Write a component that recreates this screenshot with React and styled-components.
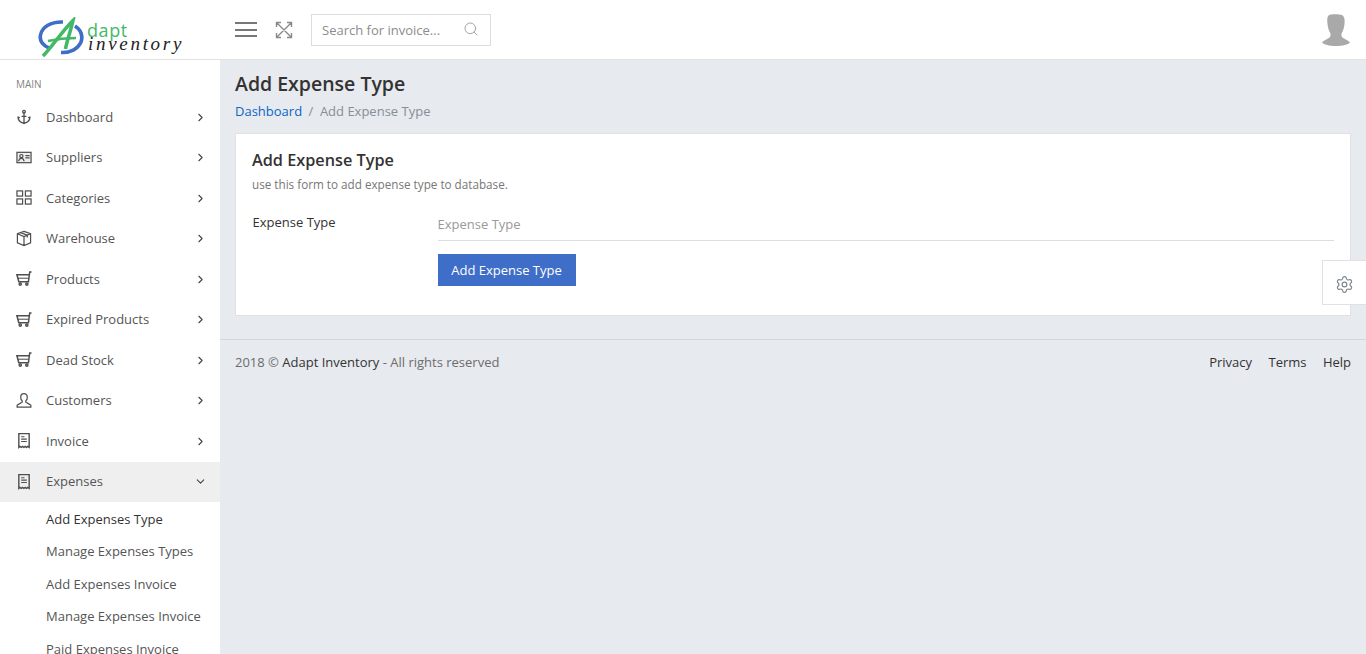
import React from 'react';
import styled, { createGlobalStyle } from 'styled-components';
import { Anchor, ChevronRight, ChevronDown, Search, Settings } from 'lucide-react';

const Global = createGlobalStyle`
  html, body {
    margin: 0;
    height: 100%;
    overflow: hidden;
  }
  body {
    font-family: "Open Sans", "Noto Sans", sans-serif;
    font-size: 13px;
    color: #555;
    background: #e7eaef;
  }
  * { box-sizing: border-box; }
`;

const Page = styled.div`
  position: relative;
  height: 654px;
  overflow: hidden;
  display: flex;
  flex-direction: column;
`;

const Header = styled.header`
  height: 60px;
  flex: none;
  display: flex;
  align-items: center;
  background: #fff;
  border-bottom: 1px solid #e2e2e2;
`;

const LogoBox = styled.div`
  width: 220px;
  flex: none;
  height: 59px;
  display: flex;
  padding: 17px 0 0 37px;
`;

const LogoWords = styled.div`
  display: flex;
  flex-direction: column;
`;

const LogoTop = styled.span`
  font-size: 18px;
  line-height: 10px;
  margin-top: 8px;
  margin-left: 2px;
  letter-spacing: 0.6px;
  color: #43b866;
`;

const LogoBottom = styled.span`
  font-family: "Liberation Serif", serif;
  font-style: italic;
  font-size: 19px;
  line-height: 16px;
  margin-top: 1px;
  margin-left: 3px;
  letter-spacing: 2.7px;
  color: #222;
`;

const Burger = styled.button`
  width: 22px;
  height: 15px;
  margin-left: 15px;
  padding: 0;
  border: 0;
  background: none;
  display: flex;
  flex-direction: column;
  justify-content: space-between;
  span {
    display: block;
    height: 2px;
    background: #777;
  }
`;

const Expand = styled.svg`
  width: 18px;
  height: 18px;
  margin-left: 18px;
  color: #8a8a8a;
`;

const SearchBox = styled.div`
  width: 180px;
  height: 32px;
  margin-left: 18px;
  padding: 0 10px;
  display: flex;
  align-items: center;
  justify-content: space-between;
  border: 1px solid #dcdcdc;
  color: #8c8c8c;
  font-size: 13px;
  svg { color: #a3a3a3; margin: -2px 1px 0 0; }
`;

const Avatar = styled.svg`
  width: 28px;
  height: 32px;
  margin-left: auto;
  margin-right: 16px;
  margin-top: 1px;
`;

const Body = styled.div`
  flex: 1;
  min-height: 0;
  display: flex;
`;

const Sidebar = styled.aside`
  width: 220px;
  flex: none;
  background: #fff;
  overflow: hidden;
  padding-top: 17px;
`;

const SideTitle = styled.div`
  font-size: 10px;
  line-height: 14px;
  color: #848484;
  padding-left: 16px;
  margin-bottom: 5.5px;
  text-transform: uppercase;
`;

const NavRow = styled.div`
  height: 40.5px;
  display: flex;
  align-items: center;
  padding: 0 13.5px 0 16px;
  color: #555;
  background: ${p => (p.$open ? '#efefef' : 'transparent')};
  margin-top: ${p => (p.$open ? '0.5px' : '0')};
  padding-bottom: ${p => (p.$open ? '1px' : '0')};
`;

const NavIcon = styled.span`
  width: 16px;
  height: 16px;
  display: flex;
  align-items: center;
  justify-content: center;
  color: #4f4f4f;
  margin-right: 14px;
  flex: none;
`;

const NavLabel = styled.span`
  flex: 1;
`;

const Chevron = styled.span`
  display: flex;
  margin-top: 1px;
  color: #444;
`;

const SubRow = styled.div`
  height: 32.4px;
  line-height: 32.4px;
  padding-left: 46px;
  white-space: nowrap;
  color: ${p => (p.$active ? '#333' : '#555')};
`;

const SubList = styled.div`
  padding-top: 1px;
`;

const Main = styled.main`
  flex: 1;
  min-width: 0;
  display: flex;
  flex-direction: column;
`;

const PageHead = styled.div`
  padding: 9px 15px 0;
  height: 73px;
`;

const PageTitle = styled.h1`
  margin: 0;
  font-size: 19.5px;
  line-height: 30px;
  font-weight: 600;
  color: #333;
`;

const Crumbs = styled.div`
  margin-top: 2px;
  line-height: 20px;
  color: #868e96;
  a { color: #0b66c3; text-decoration: none; }
  span { margin: 0 6.5px; }
`;

const Card = styled.section`
  margin: 0 15px;
  height: 183px;
  padding: 15px 16px;
  background: #fff;
  border: 1px solid #dfe1e5;
`;

const CardTitle = styled.h2`
  margin: 0;
  font-size: 16.25px;
  line-height: 22px;
  font-weight: 600;
  color: #333;
`;

const CardHint = styled.p`
  margin: 5px 0 0;
  font-size: 11.7px;
  line-height: 16px;
  color: #777;
`;

const FormRow = styled.div`
  display: grid;
  grid-template-columns: 185.5px 1fr;
  margin-top: 14px;
`;

const FieldLabel = styled.label`
  line-height: 20px;
  padding: 6px 0 0 0.5px;
  color: #333;
`;

const TextInput = styled.input`
  display: block;
  width: 100%;
  height: 35px;
  padding: 2px 0 0;
  border: 0;
  border-bottom: 1px solid #ddd;
  outline: none;
  font: inherit;
  &::placeholder { color: #999; opacity: 1; }
`;

const Submit = styled.button`
  display: block;
  margin-top: 13px;
  width: 138px;
  height: 32px;
  padding: 0;
  border: 0;
  font: inherit;
  color: #fff;
  background: #3f6ec8;
`;

const Footer = styled.footer`
  margin-top: 23px;
  padding: 12px 15px 0;
  border-top: 1px solid #d3d6da;
  display: flex;
  justify-content: space-between;
  line-height: 20px;
  color: #6c6c6c;
  b { font-weight: 400; color: #333; }
`;

const FooterLinks = styled.div`
  display: flex;
  gap: 16.4px;
  color: #333;
`;

const SettingsTab = styled.div`
  position: absolute;
  right: 0;
  top: 260px;
  width: 44px;
  height: 45px;
  padding-top: 3px;
  display: flex;
  align-items: center;
  justify-content: center;
  background: #fff;
  border: 1px solid #dfe1e5;
  border-right: 0;
  color: #7d858d;
`;

const Line = ({ children }) => (
  <svg width={17} height={17} viewBox="0 0 17 17" fill="none" stroke="currentColor" strokeWidth="1.3">
    {children}
  </svg>
);

const IdIcon = () => (
  <Line>
    <rect x="1" y="3" width="15" height="11" fill="#f1eeee" />
    <circle cx="5.7" cy="7" r="1.7" />
    <path d="M2.8 12.5c.3-2 1.4-3 2.9-3s2.6 1 2.9 3M10 6.5h4.5M10 9h4.5" />
  </Line>
);

const GridIcon = () => (
  <Line>
    <rect x="1" y="1.5" width="6" height="5.5" />
    <rect x="10" y="1.5" width="6" height="5.5" />
    <rect x="1" y="10" width="6" height="5.5" />
    <rect x="10" y="10" width="6" height="5.5" />
  </Line>
);

const BoxIcon = () => (
  <Line>
    <path d="M8.5 1L15.5 3.5V13L8.5 16L1.5 13V3.5ZM1.5 3.5L8.5 6.5L15.5 3.5M8.5 6.5V16M5 2.2L12 5V7.5" />
  </Line>
);

const CartIcon = () => (
  <Line>
    <path d="M16.5 1.5H14.6L13.2 12H3L1 4.5H14.2" strokeWidth="1.6" />
    <path d="M2 8.2H13.6" strokeWidth="1.1" />
    <circle cx="4.5" cy="14.4" r="1.2" strokeWidth="1.5" />
    <circle cx="11.5" cy="14.4" r="1.2" strokeWidth="1.5" />
  </Line>
);

const UserIcon = () => (
  <Line>
    <path d="M8.5 1.2c-2.2 0-3.5 1.6-3.5 3.8 0 1.6.6 3 1.5 3.8.3.5.2 1.5-.4 1.9-1.4.9-4 1.6-4.9 3V15.5h14.6V13.7c-.9-1.4-3.5-2.1-4.9-3-.6-.4-.7-1.4-.4-1.9.9-.8 1.5-2.2 1.5-3.8 0-2.2-1.3-3.8-3.5-3.8Z" />
  </Line>
);

const ReceiptIcon = () => (
  <Line>
    <path d="M3 1.2H14V15.8L12.6 14.8L11.2 15.8L9.8 14.8L8.4 15.8L7 14.8L5.6 15.8L4.2 14.8L3 15.8Z" strokeWidth="1.5" />
    <path d="M5.5 4.5H9M5.5 7H11.5M5.5 9.5H11.5" strokeWidth="1.2" />
  </Line>
);

const navItems = [
  { label: 'Dashboard', icon: <Anchor size={16} strokeWidth={2} /> },
  { label: 'Suppliers', icon: <IdIcon /> },
  { label: 'Categories', icon: <GridIcon /> },
  { label: 'Warehouse', icon: <BoxIcon /> },
  { label: 'Products', icon: <CartIcon /> },
  { label: 'Expired Products', icon: <CartIcon /> },
  { label: 'Dead Stock', icon: <CartIcon /> },
  { label: 'Customers', icon: <UserIcon /> },
  { label: 'Invoice', icon: <ReceiptIcon /> },
  { label: 'Expenses', icon: <ReceiptIcon />, open: true },
];

const subItems = [
  'Add Expenses Type',
  'Manage Expenses Types',
  'Add Expenses Invoice',
  'Manage Expenses Invoice',
  'Paid Expenses Invoice',
];

const LogoMark = () => (
  <svg width="48" height="42" viewBox="0 0 48 42" fill="none">
    <path d="M12 31C5 28 2.500 23 3.500 18C5 10 14 4.500 26 5" stroke="#3f6ec8" strokeWidth="3.6" />
    <path d="M38 9C44 13 46 19 44 25C41 32 33 36 24 35.500" stroke="#3f6ec8" strokeWidth="3.6" />
    <path d="M6 39C14 31 27 12 36 3.500C34 13 30 23 28.500 32" stroke="#43b866" strokeWidth="3.6" />
    <path d="M11 24C20 22 30 21 39 21" stroke="#43b866" strokeWidth="2.6" />
  </svg>
);

export default function App() {
  return (
    <Page>
      <Global />
      <Header>
        <LogoBox>
          <LogoMark />
          <LogoWords>
            <LogoTop>dapt</LogoTop>
            <LogoBottom>inventory</LogoBottom>
          </LogoWords>
        </LogoBox>
        <Burger aria-label="menu"><span /><span /><span /></Burger>
        <Expand viewBox="0 0 18 18" fill="none" stroke="currentColor" strokeWidth="1.4">
          <path d="M1.5 6V1.500H6M12 1.500H16.500V6M16.500 12V16.500H12M6 16.500H1.500V12M2 2L16 16M16 2L2 16" />
        </Expand>
        <SearchBox>
          <span>Search for invoice...</span>
          <Search size={16} strokeWidth={1.5} />
        </SearchBox>
        <Avatar viewBox="0 0 28 32">
          <path
            fill="#a9a9a9"
            d="M7 1C9 0 17 0 20 1C22.500 2.500 23 6 22.500 10C22.200 14 21 17 19.500 19.500C19 22 20 23.500 22 24.500C24.500 26 27 27 28 28.500C26 30.500 21 32 14 32C7 32 2 30.500 0 28.500C1 27 3.500 26 6 24.500C8 23.500 9 22 8.500 19.500C7 17 5.800 14 5.500 10C5 6 5 2.500 7 1Z"
          />
        </Avatar>
      </Header>
      <Body>
        <Sidebar>
          <SideTitle>Main</SideTitle>
          {navItems.map(item => (
            <NavRow key={item.label} $open={item.open}>
              <NavIcon>{item.icon}</NavIcon>
              <NavLabel>{item.label}</NavLabel>
              <Chevron>
                {item.open
                  ? <ChevronDown size={13} strokeWidth={2} />
                  : <ChevronRight size={13} strokeWidth={2} />}
              </Chevron>
            </NavRow>
          ))}
          <SubList>
            {subItems.map((label, i) => (
              <SubRow key={label} $active={i === 0}>{label}</SubRow>
            ))}
          </SubList>
        </Sidebar>
        <Main>
          <PageHead>
            <PageTitle>Add Expense Type</PageTitle>
            <Crumbs>
              <a href="#dashboard">Dashboard</a>
              <span>/</span>
              Add Expense Type
            </Crumbs>
          </PageHead>
          <Card>
            <CardTitle>Add Expense Type</CardTitle>
            <CardHint>use this form to add expense type to database.</CardHint>
            <FormRow>
              <FieldLabel>Expense Type</FieldLabel>
              <div>
                <TextInput placeholder="Expense Type" />
                <Submit>Add Expense Type</Submit>
              </div>
            </FormRow>
          </Card>
          <Footer>
            <div>2018 © <b>Adapt Inventory</b> - All rights reserved</div>
            <FooterLinks>
              <span>Privacy</span>
              <span>Terms</span>
              <span>Help</span>
            </FooterLinks>
          </Footer>
        </Main>
      </Body>
      <SettingsTab>
        <Settings size={19} strokeWidth={1.5} />
      </SettingsTab>
    </Page>
  );
}
